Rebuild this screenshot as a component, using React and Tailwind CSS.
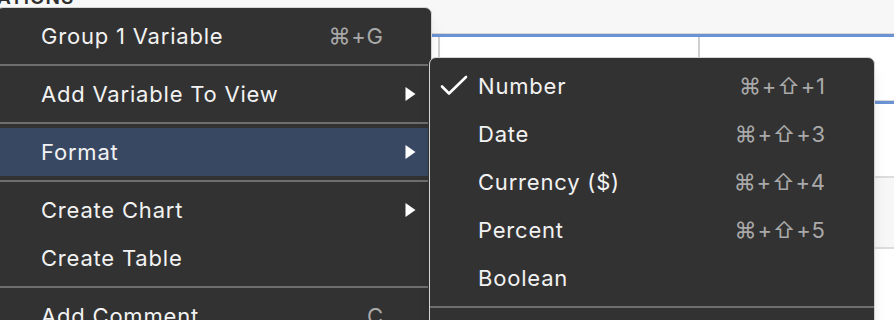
import React from 'react';

const MAIN_ITEMS = [
  { label: 'Group 1 Variable', shortcut: '⌘+G' },
  'sep',
  { label: 'Add Variable To View', submenu: true },
  'sep',
  { label: 'Format', submenu: true, active: true },
  'sep',
  { label: 'Create Chart', submenu: true },
  { label: 'Create Table' },
  'sep',
  { label: 'Add Comment', shortcut: 'C' },
];

const FORMAT_ITEMS = [
  { label: 'Number', shortcut: '⌘+⇧+1', checked: true },
  { label: 'Date', shortcut: '⌘+⇧+3' },
  { label: 'Currency ($)', shortcut: '⌘+⇧+4' },
  { label: 'Percent', shortcut: '⌘+⇧+5' },
  { label: 'Boolean' },
  'sep',
  { label: 'Text' },
];

function Separator() {
  return (
    <div className="py-1">
      <div className="h-[2px] bg-[#6e6e6e]" />
    </div>
  );
}

function Arrow() {
  return (
    <svg className="absolute right-3 top-1/2 -translate-y-1/2" width="11" height="15" viewBox="0 0 11 15">
      <polygon points="0.5,0.5 10.5,7.5 0.5,14.5" fill="#ffffff" />
    </svg>
  );
}

function Check() {
  return (
    <svg className="absolute left-[10px] top-1/2 -translate-y-1/2" width="28" height="22" viewBox="0 0 28 22">
      <path d="M2 11.5 L9 18.5 L26 2" fill="none" stroke="#ffffff" strokeWidth="2.6" strokeLinecap="round" strokeLinejoin="round" />
    </svg>
  );
}

function MenuItem({ item, pad }) {
  return (
    <div
      className={`relative flex items-center h-12 ${pad} ${
        item.active ? 'bg-[#394862]' : ''
      }`}
    >
      {item.checked && <Check />}
      <span className="flex-1 text-[#f2f2f2]">{item.label}</span>
      {item.shortcut && <span className="text-[#a9a9a9] -mr-[0.8px]">{item.shortcut}</span>}
      {item.submenu && <Arrow />}
    </div>
  );
}

function Menu({ items, pad, className }) {
  return (
    <div
      className={`absolute bg-[#323232] border border-[#d4d4d4] rounded-[7px] py-1 shadow-lg text-[22px] tracking-[0.8px] ${className}`}
    >
      {items.map((item, i) =>
        item === 'sep' ? <Separator key={i} /> : <MenuItem key={i} item={item} pad={pad} />
      )}
    </div>
  );
}

export default function App() {
  return (
    <div
      className="relative w-[894px] h-[320px] overflow-hidden bg-white"
      style={{ fontFamily: 'Inter, "DejaVu Sans", sans-serif' }}
    >
      {/* sheet behind the menus */}
      <div className="h-[33px] bg-[#f7f7f7] overflow-hidden">
        <div className="-mt-[16px] -ml-[3px] text-[19px] font-semibold tracking-[1px] text-[#2e2e2e]">
          ATIONS
        </div>
      </div>
      <div className="h-px bg-[#d6d6d6]" />
      <div className="h-[3px] bg-[#6b93d4]" />
      <div className="h-[63px] flex">
        <div className="w-[440px] border-r-2 border-[#cfcfcf]" />
        <div className="w-[260px] border-r-2 border-[#cfcfcf]" />
        <div className="flex-1" />
      </div>
      <div className="h-px bg-[#d6d6d6]" />
      <div className="h-[3px] bg-[#6b93d4]" />
      <div className="h-[72px]" />
      <div className="h-[2px] bg-[#dcdcdc]" />
      <div className="h-[69px] bg-[#f7f7f7]" />
      <div className="h-[2px] bg-[#dcdcdc]" />

      <Menu items={MAIN_ITEMS} pad="pl-[41px] pr-[45px]" className="-left-[4px] top-[7px] w-[436px] px-[3px]" />
      <Menu items={FORMAT_ITEMS} pad="pl-[48px] pr-[49px]" className="left-[429px] top-[57px] w-[446px] px-0" />
    </div>
  );
}
